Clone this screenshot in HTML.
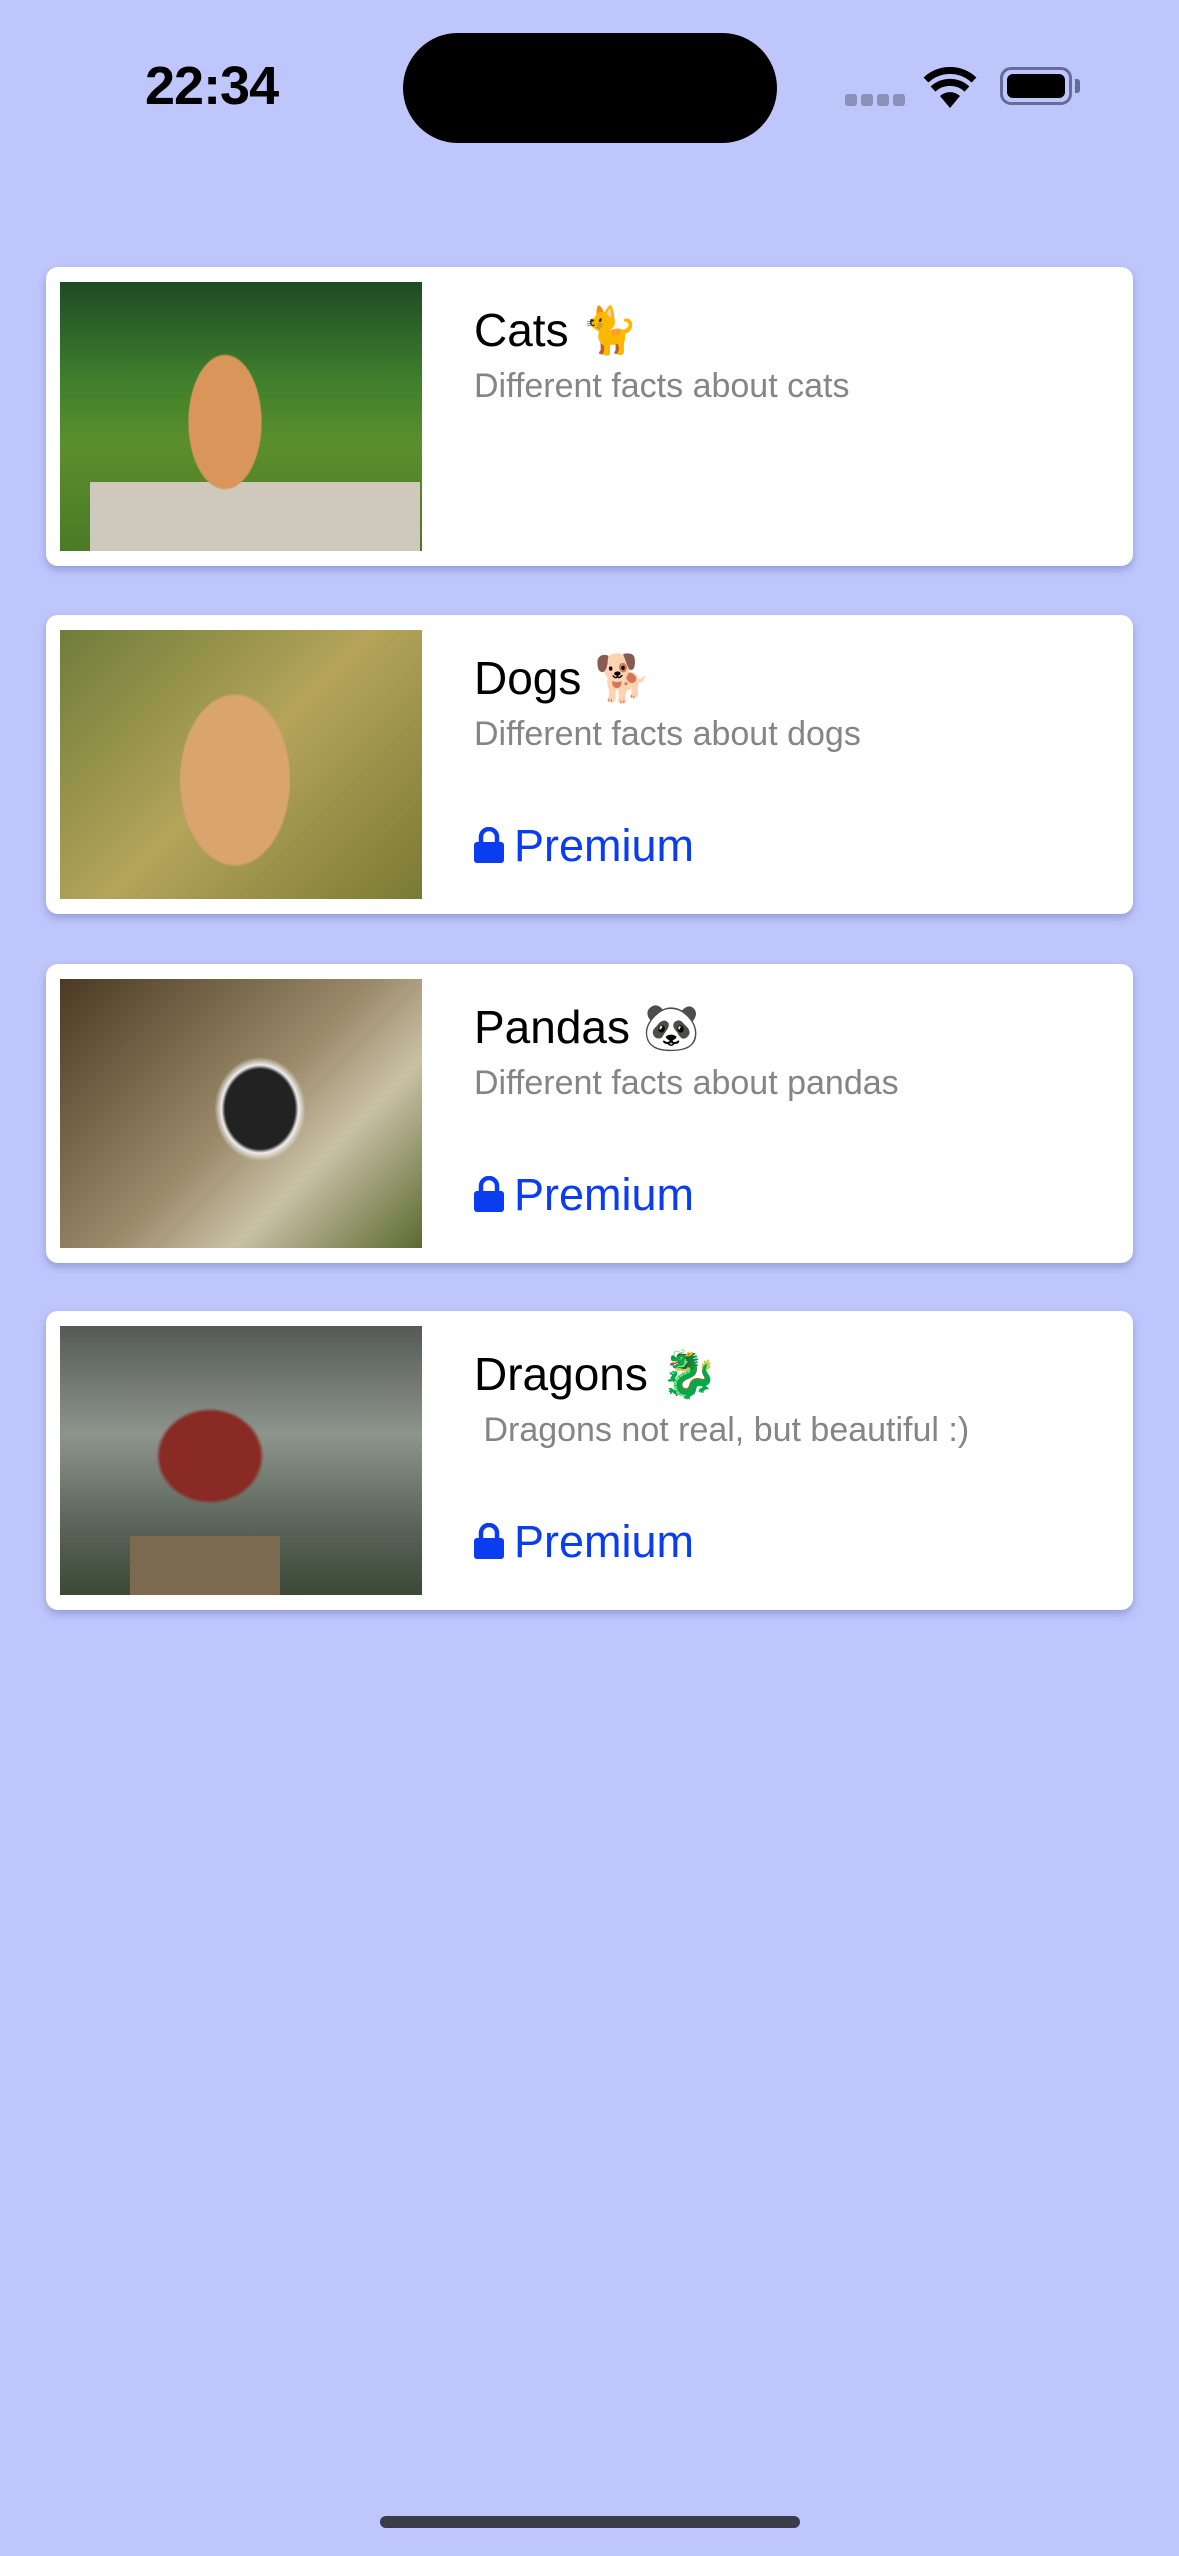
<!DOCTYPE html>
<html><head><meta charset="utf-8"><style>
*{margin:0;padding:0;box-sizing:border-box}
body{width:1179px;height:2556px;background:#bfc6fc;position:relative;overflow:hidden;font-family:"Liberation Sans","DejaVu Sans",sans-serif}
.time{position:absolute;left:145px;top:55px;font-size:54px;font-weight:bold;letter-spacing:-1px}
.island{position:absolute;left:403px;top:33px;width:374px;height:110px;border-radius:55px;background:#000}
.card{position:absolute;left:46px;width:1087px;height:299px;background:#fff;border-radius:12px;box-shadow:0 4px 8px rgba(70,80,150,.35)}
.img{position:absolute;left:14px;top:15px;width:362px;height:269px}
.t{position:absolute;left:428px;top:36px;font-size:46px;color:#000}
.s{position:absolute;left:428px;top:100px;font-size:34px;color:#858585}
.p{position:absolute;left:428px;top:205px;font-size:45px;color:#0a3cf0}
.p svg{vertical-align:-2px;margin-right:10px}
</style></head><body>
<div class="time">22:34</div>
<div class="island"></div>
<div style="position:absolute;left:845px;top:94px;width:60px;height:12px;display:flex;gap:4px"><i style="flex:1;background:#8a90b8;border-radius:3px"></i><i style="flex:1;background:#8a90b8;border-radius:3px"></i><i style="flex:1;background:#8a90b8;border-radius:3px"></i><i style="flex:1;background:#8a90b8;border-radius:3px"></i></div>
<svg style="position:absolute;left:923px;top:66px" width="54" height="42" viewBox="0 0 54 42"><path d="M27 42 L17 30 A15 15 0 0 1 37 30 Z" fill="#000"/><path d="M10 23 A25 25 0 0 1 44 23" stroke="#000" stroke-width="7" fill="none"/><path d="M3 14 A35 35 0 0 1 51 14" stroke="#000" stroke-width="7" fill="none"/></svg>
<div style="position:absolute;left:1000px;top:67px;width:72px;height:38px;border:3px solid #666c99;border-radius:11px;padding:4px"><div style="width:100%;height:100%;background:#000;border-radius:6px"></div></div>
<div style="position:absolute;left:1075px;top:79px;width:5px;height:14px;background:#666c99;border-radius:0 3px 3px 0"></div>

<div class="card" style="top:267px">
<div class="img" style="background:radial-gradient(ellipse 60px 110px at 165px 140px,#d9955a 60%,transparent 62%),linear-gradient(#cfc9bd,#cfc9bd) 30px 200px/330px 69px no-repeat,linear-gradient(#1f4a25,#3d7d2c 35%,#5b8f2d 60%,#4b7a25)"></div>
<div class="t">Cats 🐈</div><div class="s">Different facts about cats</div></div>

<div class="card" style="top:615px">
<div class="img" style="background:radial-gradient(ellipse 90px 140px at 175px 150px,#d9a46e 60%,transparent 62%),linear-gradient(135deg,#6e7d3a,#b5a45a 50%,#7a7a35)"></div>
<div class="t">Dogs 🐕</div><div class="s">Different facts about dogs</div>
<div class="p"><svg width="30" height="36" viewBox="0 0 30 36"><path d="M7 16V10a8 8 0 0 1 16 0v6" stroke="#0a3cf0" stroke-width="4.5" fill="none"/><rect x="0" y="15" width="30" height="21" rx="3" fill="#0a3cf0"/></svg>Premium</div></div>

<div class="card" style="top:964px">
<div class="img" style="background:radial-gradient(ellipse 70px 80px at 200px 130px,#222 50%,#eee 55%,transparent 65%),linear-gradient(135deg,#4a3a22,#9a8a6a 50%,#c9c0a5 70%,#5a6a30)"></div>
<div class="t">Pandas 🐼</div><div class="s">Different facts about pandas</div>
<div class="p"><svg width="30" height="36" viewBox="0 0 30 36"><path d="M7 16V10a8 8 0 0 1 16 0v6" stroke="#0a3cf0" stroke-width="4.5" fill="none"/><rect x="0" y="15" width="30" height="21" rx="3" fill="#0a3cf0"/></svg>Premium</div></div>

<div class="card" style="top:1311px">
<div class="img" style="background:radial-gradient(ellipse 90px 80px at 150px 130px,#8a2a25 55%,transparent 60%),linear-gradient(#7c6a50,#7c6a50) 70px 210px/150px 59px no-repeat,linear-gradient(#555a55,#8d948c 40%,#5a6358 75%,#3a4a35)"></div>
<div class="t">Dragons 🐉</div><div class="s">&nbsp;Dragons not real, but beautiful :)</div>
<div class="p"><svg width="30" height="36" viewBox="0 0 30 36"><path d="M7 16V10a8 8 0 0 1 16 0v6" stroke="#0a3cf0" stroke-width="4.5" fill="none"/><rect x="0" y="15" width="30" height="21" rx="3" fill="#0a3cf0"/></svg>Premium</div></div>

<div style="position:absolute;left:380px;top:2516px;width:420px;height:12px;border-radius:6px;background:#3a3c4a"></div>
</body></html>
